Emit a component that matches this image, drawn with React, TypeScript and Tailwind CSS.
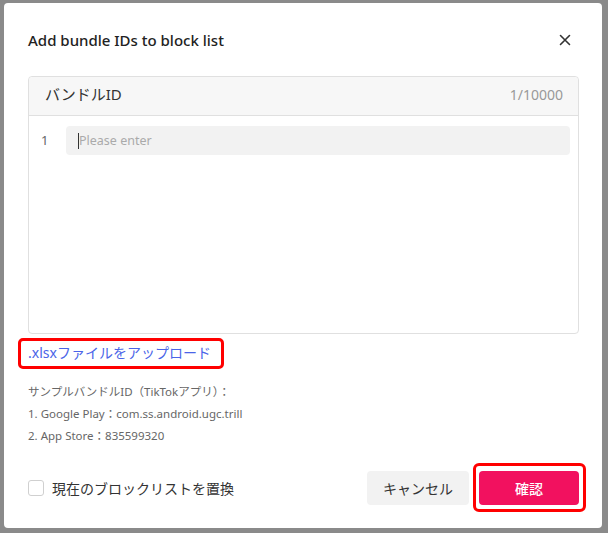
import React from 'react';

const font = "font-['Segoe_UI','Noto_Sans','Noto_Sans_CJK_JP',sans-serif]";

const CloseIcon: React.FC = () => (
  <svg width="14" height="14" viewBox="0 0 14 14" fill="none">
    <path d="M2.5 2.5L11.5 11.5M11.5 2.5L2.5 11.5" stroke="#333" strokeWidth="1.6" strokeLinecap="round" />
  </svg>
);

const App: React.FC = () => {
  return (
    <div className={`h-[533px] w-[608px] bg-[#8a8a8a] pl-[4px] pt-[3px] ${font}`}>
      <div className="flex h-[525px] w-[598px] flex-col rounded-[4px] bg-white pl-6 pr-[23px] pt-[26px]">
        {/* header */}
        <div className="flex items-center justify-between">
          <h2 className="text-[15px] leading-[22px] font-medium text-[#222]">Add bundle IDs to block list</h2>
          <button className="mr-[3px] flex h-[22px] w-[22px] items-center justify-center">
            <CloseIcon />
          </button>
        </div>

        {/* id list box */}
        <div className="mt-[25px] h-[258px] rounded-[4px] border border-[#e0e0e0]">
          <div className="flex h-[39px] items-center justify-between rounded-t-[4px] border-b border-[#e0e0e0] bg-[#f7f7f7] pb-[3px] pl-4 pr-[15px]">
            <span className="text-[15px] text-[#333]">バンドルID</span>
            <span className="text-[14px] text-[#999]">1/10000</span>
          </div>
          <div className="flex items-center pl-3 pr-2 pt-[10px]">
            <span className="w-[25px] text-[13px] text-[#666]">1</span>
            <div className="flex h-[29px] flex-1 items-center rounded-[4px] bg-[#f2f2f2] pl-3 pt-[1px]">
              <span className="h-[16px] w-px bg-[#333]" />
              <span className="text-[12.5px] text-[#aaa]">Please enter</span>
            </div>
          </div>
        </div>

        {/* upload link */}
        <div className="mt-[9px] flex">
          <span className="relative text-[14px] leading-[20px] text-[#4a64e8]">
            .xlsxファイルをアップロード
            <span className="absolute -bottom-[6px] -left-[10px] -right-[13px] -top-[5px] rounded-[5px] border-[3px] border-[#ff0000]" />
          </span>
        </div>

        {/* sample text */}
        <div className="mt-[18px] text-[11.5px] leading-[22px] text-[#666]">
          <p>サンプルバンドルID（TikTokアプリ）：</p>
          <p>1. Google Play：com.ss.android.ugc.trill</p>
          <p>2. App Store：835599320</p>
        </div>

        {/* footer */}
        <div className="mt-[24px] flex items-center justify-between">
          <label className="flex items-center gap-2">
            <span className="h-4 w-4 rounded-[3px] border border-[#d0d0d0] bg-white" />
            <span className="text-[14px] text-[#333]">現在のブロックリストを置換</span>
          </label>
          <div className="flex items-center gap-[10px]">
            <button className="h-[34px] w-[102px] rounded-[4px] bg-[#f2f2f2] text-[14px] text-[#333]">キャンセル</button>
            <div className="relative">
              <button className="h-[34px] w-[100px] rounded-[4px] bg-[#f2115f] text-[14px] font-medium text-white">確認</button>
              <span className="absolute -bottom-[7px] -left-[6px] -right-[7px] -top-[8px] rounded-[6px] border-[3px] border-[#ff0000]" />
            </div>
          </div>
        </div>
      </div>
    </div>
  );
};

export default App;
